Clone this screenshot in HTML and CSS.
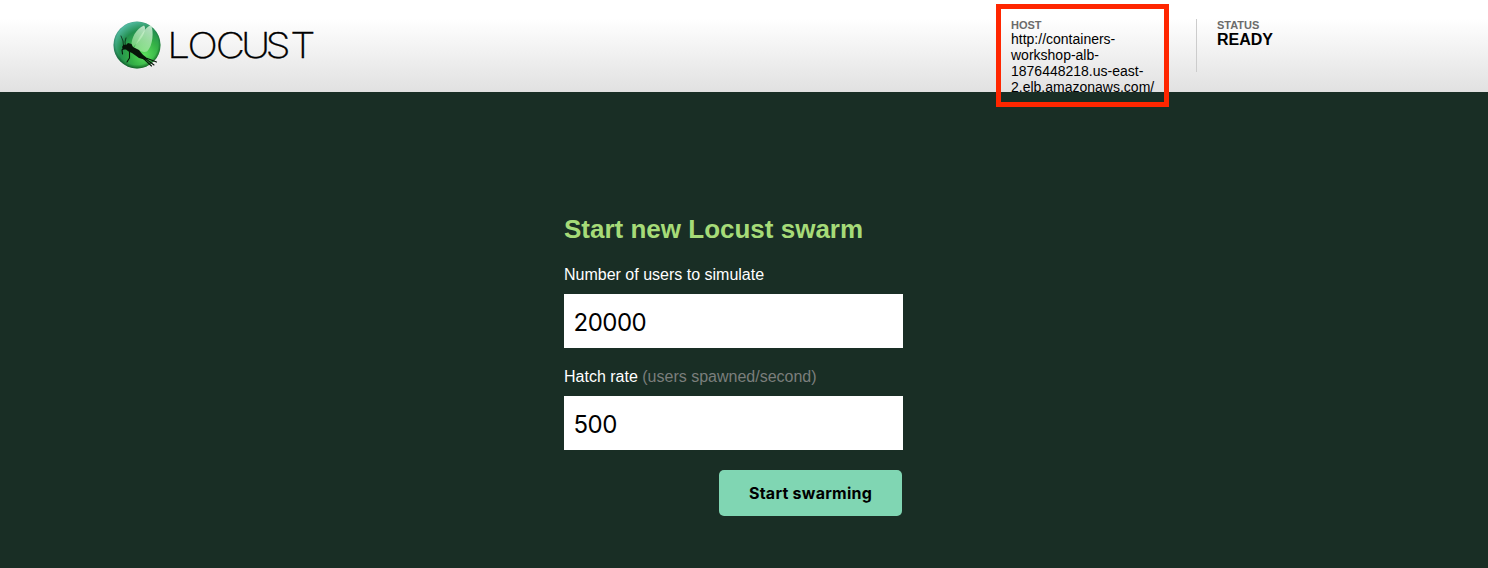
FILE: index.html
```html
<!DOCTYPE html>
<html lang="en">
<head>
<meta charset="utf-8">
<title>Locust</title>
<link rel="stylesheet" href="styles.css">
</head>
<body>
<header class="top">
  <div class="logo">
    <svg class="logo-mark" viewBox="0 0 48 48" width="48" height="48" aria-hidden="true">
      <defs>
        <radialGradient id="ball" cx="0.66" cy="0.7" r="0.85">
          <stop offset="0" stop-color="#5be05c"/>
          <stop offset="0.35" stop-color="#35b146"/>
          <stop offset="0.62" stop-color="#23904f"/>
          <stop offset="1" stop-color="#6bd0cc"/>
        </radialGradient>
        <radialGradient id="shade" cx="0.5" cy="0.47" r="0.53">
          <stop offset="0.85" stop-color="#003c12" stop-opacity="0"/>
          <stop offset="1" stop-color="#002d12" stop-opacity="0.6"/>
        </radialGradient>
        <linearGradient id="wing" x1="0.7" y1="0" x2="0.2" y2="1">
          <stop offset="0" stop-color="#d9f4dc" stop-opacity="0.8"/>
          <stop offset="1" stop-color="#a5e8a2" stop-opacity="0.6"/>
        </linearGradient>
      </defs>
      <circle cx="24" cy="24" r="23.5" fill="url(#ball)"/>
      <circle cx="24" cy="24" r="23.5" fill="url(#shade)"/>
      <path d="M18.500 25C18 17 23 8 31 4.500C34 7 31 17 20 26Z" fill="url(#wing)"/>
      <path d="M21 27C26 17 32 6 38 4C41 10 40 25 34 30.500C29 32 25 29 21 27Z" fill="url(#wing)"/>
      <path d="M9 26L10.500 23.500L13 24L15 22L18.500 23L20 26L26 29L29 33L33 39L26 37L19 32L15.500 30.500L13 28.500L10 28.500Z" fill="#071609"/>
      <g fill="none" stroke="#071609" stroke-linecap="round" stroke-linejoin="round">
        <path d="M10.500 25L10 20L8 15M12.500 24.500L12 21L13 17" stroke-width="0.7"/>
        <path d="M11 27L9 29L9.500 33M18 29L16.500 31L16.500 37L14 41" stroke-width="1.100"/>
        <path d="M24 33L31 38L38.500 45M24 30L33 37L43.500 41M29 35L41 44" stroke-width="1.100"/>
      </g>
    </svg>
    <svg class="logo-word" viewBox="0 0 150 40" width="150" height="40" role="img" aria-label="Locust">
      <text class="wordmark" y="33" x="1.100 18.800 43.200 65.300 86.600 108" transform="scale(1.15 1)">LOCUST</text>
    </svg>
  </div>
  <div class="boxes">
    <div class="box box-host">
      <div class="label">HOST</div>
      <div class="host">http://containers-<br>workshop-alb-<br>1876448218.us-east-<br>2.elb.amazonaws.com/</div>
      <div class="highlight"></div>
    </div>
    <div class="box box-status">
      <div class="label">STATUS</div>
      <div class="status">READY</div>
    </div>
  </div>
</header>
<main class="main">
  <form class="start">
    <h2 class="title">Start new Locust swarm</h2>
    <label class="field-label" for="users">Number of users to simulate</label>
    <input class="field" id="users" type="text" value="20000">
    <label class="field-label" for="rate">Hatch rate <span class="hint">(users spawned/second)</span></label>
    <input class="field" id="rate" type="text" value="500">
    <button class="submit" type="button">Start swarming</button>
  </form>
</main>
</body>
</html>
```

FILE: styles.css
```css
* { box-sizing: border-box; }
body {
  margin: 0;
  height: 568px;
  overflow: hidden;
  background: #192e25;
  font-family: "Liberation Sans", Arial, sans-serif;
}
.top {
  display: flex;
  justify-content: space-between;
  height: 92px;
  padding: 0 195px 0 113px;
  background: linear-gradient(#fff 20%, #e1e1e1);
}
.logo { display: flex; padding-top: 21px; }
.logo-mark { display: block; }
.logo-word { display: block; margin: 4px 0 0 5px; }
.wordmark {
  font-family: Inter, sans-serif;
  font-size: 35px;
  font-weight: 200;
  fill: #000;
  stroke: #000;
  stroke-width: 0.3px;
}
.boxes { display: flex; padding-top: 19px; }
.box { height: 53px; }
.box-host { position: relative; width: 186px; border-right: 1px solid #ccc; }
.box-status { width: 96px; padding-left: 20px; }
.label {
  height: 12px;
  line-height: 13px;
  font-size: 11px;
  font-weight: bold;
  color: #6b6b6b;
}
.host { font-size: 14px; line-height: 16px; color: #000; white-space: nowrap; }
.status { font-size: 16px; line-height: 18px; font-weight: bold; color: #000; }
.highlight {
  position: absolute;
  left: -15px;
  top: -15px;
  width: 173px;
  height: 103px;
  border: 5px solid #ff2600;
}
.main { display: flex; padding: 122px 0 0 564px; }
.start { display: flex; flex-direction: column; width: 339px; }
.title { margin: 0 0 21px; font-size: 26px; line-height: 30px; color: #a6db78; white-space: nowrap; }
.field-label { height: 29px; font-size: 16px; line-height: 19px; color: #fff; }
.hint { color: #7b7e7c; }
.field {
  height: 54px;
  margin: 0 0 19px;
  padding: 2px 9px 0 9.500px;
  border: 0;
  background: #fff;
  color: #000;
  font-family: Inter, sans-serif;
  font-size: 24px;
  letter-spacing: -0.5px;
}
.submit {
  align-self: flex-end;
  width: 183px;
  height: 46px;
  margin: 1px 1px 0 0;
  padding: 0;
  border: 0;
  border-radius: 5px;
  background: #80d6b3;
  color: #000;
  font-family: Inter, sans-serif;
  font-size: 16px;
  font-weight: 700;
  letter-spacing: 0.25px;
}
```
